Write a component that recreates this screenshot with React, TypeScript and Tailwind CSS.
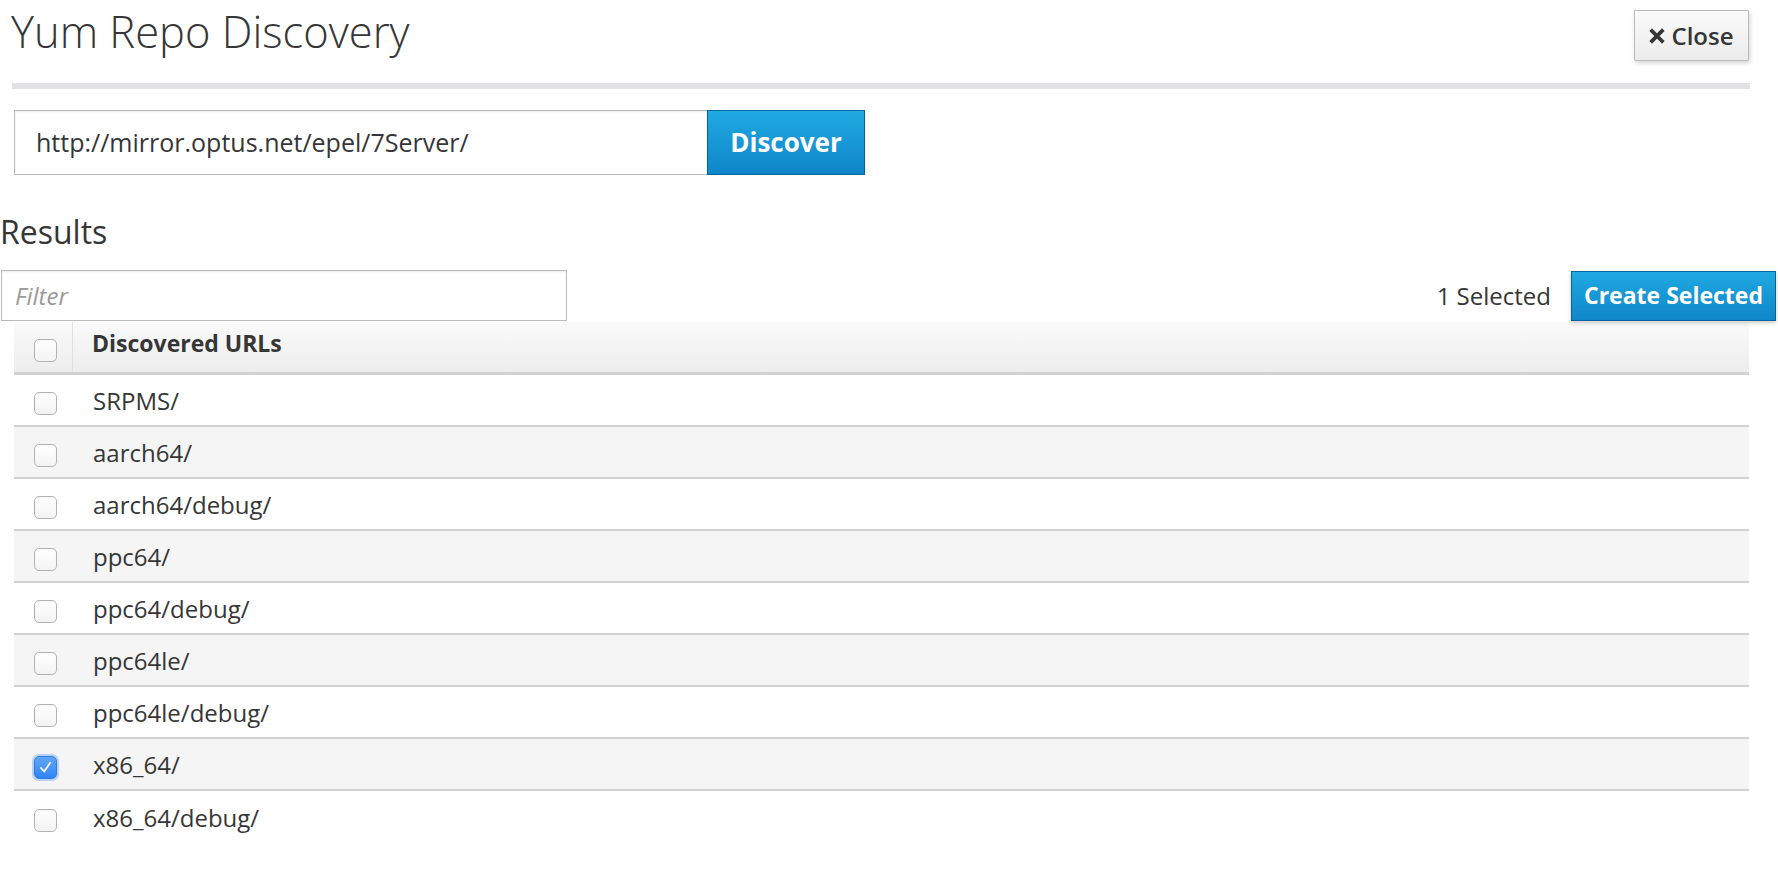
import React from "react";

const rows: { label: string; checked?: boolean }[] = [
  { label: "SRPMS/" },
  { label: "aarch64/" },
  { label: "aarch64/debug/" },
  { label: "ppc64/" },
  { label: "ppc64/debug/" },
  { label: "ppc64le/" },
  { label: "ppc64le/debug/" },
  { label: "x86_64/", checked: true },
  { label: "x86_64/debug/" },
];

function Box({ checked }: { checked?: boolean }) {
  if (checked) {
    return (
      <div className="w-[23px] h-[23px] rounded-[5px] border border-[#2f7fe0] bg-gradient-to-b from-[#5fa6fb] to-[#2f85f2] flex items-center justify-center shadow-[0_0_0_2px_rgba(110,165,245,0.45)]">
        <svg width="15" height="15" viewBox="0 0 15 15">
          <path d="M3 8 L6.2 11.5 L12.2 2.8" fill="none" stroke="#fff" strokeWidth="1.8" strokeLinecap="round" strokeLinejoin="round" />
        </svg>
      </div>
    );
  }
  return (
    <div className="w-[23px] h-[23px] rounded-[5px] border border-[#b3b3b3] bg-gradient-to-b from-white to-[#f3f3f3] shadow-[inset_0_1px_1px_rgba(0,0,0,0.04)]" />
  );
}

export default function App() {
  return (
    <div className="w-[1778px] h-[882px] overflow-hidden bg-white text-[#363636] font-['Open_Sans',sans-serif]">
      {/* Header */}
      <div className="flex items-start justify-between pl-[11px] pr-[29px]">
        <h1 className="pt-[2px] text-[43.5px] leading-[60px] font-light text-[#363636]">Yum Repo Discovery</h1>
        <button className="mt-[10px] w-[115px] h-[51px] flex items-center justify-center gap-[6px] rounded-[1px] border border-[#bbbbbb] bg-gradient-to-b from-[#fafafa] to-[#ececec] shadow-[1px_2px_4px_rgba(0,0,0,0.18)] text-[24px] font-semibold text-[#363636]">
          <svg width="16" height="16" viewBox="0 0 16 16">
            <path d="M3 3 L13 13 M13 3 L3 13" stroke="#363636" strokeWidth="3.8" strokeLinecap="square" />
          </svg>
          <span>Close</span>
        </button>
      </div>
      <div className="mt-[21px] ml-[12px] w-[1738px] h-[6px] bg-[#e2e2e4]" />

      {/* URL input row */}
      <div className="mt-[21px] ml-[14px] flex">
        <div className="w-[693px] h-[65px] border border-[#bababa] border-r-0 shadow-[inset_0_1px_2px_rgba(0,0,0,0.08)] flex items-center pl-[21px] text-[25px] text-[#363636]">
          http://mirror.optus.net/epel/7Server/
        </div>
        <button className="w-[158px] h-[65px] border border-[#00659c] bg-gradient-to-b from-[#20a9e2] to-[#0f86c9] text-white text-[26px] font-bold flex items-center justify-center">
          Discover
        </button>
      </div>

      {/* Results */}
      <h2 className="mt-[35px] h-[44px] text-[32px] leading-[44px] font-normal text-[#363636]">Results</h2>

      <div className="mt-[16px] flex items-center justify-between pr-[2px]">
        <div className="ml-[1px] w-[566px] h-[51px] border border-[#bababa] shadow-[inset_0_1px_2px_rgba(0,0,0,0.08)] flex items-center pl-[13px] text-[24px] italic text-[#9a9a9a]">
          Filter
        </div>
        <div className="flex items-center gap-[20px]">
          <span className="text-[24px] text-[#363636]">1 Selected</span>
          <button className="w-[205px] h-[50px] border border-[#00659c] bg-gradient-to-b from-[#20a9e2] to-[#0f86c9] text-white text-[23px] font-bold flex items-center justify-center shadow-[0_2px_4px_rgba(0,0,0,0.2)]">
            Create Selected
          </button>
        </div>
      </div>

      {/* Table */}
      <div className="mt-[1px] ml-[14px] w-[1735px]">
        <div className="h-[53px] flex border-b-[3px] border-[#d1d1d1] bg-gradient-to-b from-[#fafafa] to-[#ededed]">
          <div className="w-[59px] border-r border-[#e0e0e0] flex items-center pl-[20px] pt-[6px]">
            <Box />
          </div>
          <div className="pl-[19px] pt-[5px] text-[23px] leading-[32px] font-bold text-[#363636]">Discovered URLs</div>
        </div>
        {rows.map((r, i) => (
          <div
            key={r.label}
            className={`h-[52px] flex items-center ${i === rows.length - 1 ? "" : "border-b-2 border-[#d1d1d1]"} ${i % 2 === 1 ? "bg-[#f5f5f5]" : "bg-white"}`}
          >
            <div className="w-[59px] pl-[20px] pt-[6px] flex items-center">
              <Box checked={r.checked} />
            </div>
            <div className="pl-[20px] pt-[2px] text-[24px] text-[#363636]">{r.label}</div>
          </div>
        ))}
      </div>
    </div>
  );
}
